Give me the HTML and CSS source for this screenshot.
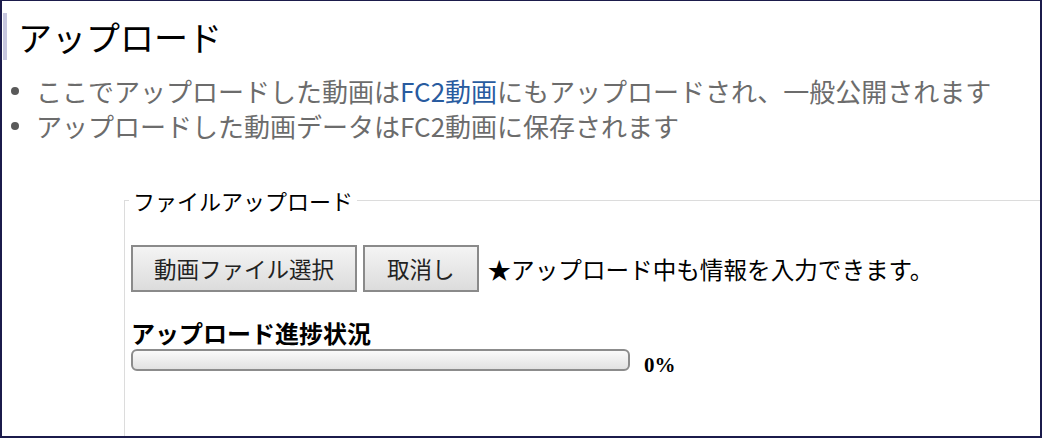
FILE: index.html
```html
<!DOCTYPE html>
<html lang="ja">
<head>
<meta charset="utf-8">
<link rel="stylesheet" href="styles.css">
</head>
<body>
<div class="frame">
  <h1 class="title">アップロード</h1>
  <ul class="notes">
    <li>ここでアップロードした動画は<a class="link" href="#">FC2動画</a>にもアップロードされ、一般公開されます</li>
    <li>アップロードした動画データはFC2動画に保存されます</li>
  </ul>
  <fieldset class="upload">
    <legend class="upload-legend">ファイルアップロード</legend>
    <div class="actions">
      <button class="btn" type="button">動画ファイル選択</button>
      <button class="btn btn-cancel" type="button">取消し</button>
      <span class="hint">★アップロード中も情報を入力できます。</span>
    </div>
    <div class="progress-label">アップロード進捗状況</div>
    <div class="progress-row">
      <div class="progress-bar"></div>
      <span class="progress-value">0%</span>
    </div>
  </fieldset>
</div>
</body>
</html>
```

FILE: styles.css
```css
html, body {
  margin: 0;
  padding: 0;
  background: #ffffff;
}
body {
  font-family: "Noto Sans CJK JP", "Noto Sans", sans-serif;
  color: #000;
}
.frame {
  box-sizing: border-box;
  width: 1042px;
  height: 438px;
  border: 2px solid #1b1b4b;
  border-top-width: 1px;
  overflow: hidden;
  padding: 12px 0 0 1px;
}
.title {
  margin: 0;
  border-left: 4px solid #c6c6de;
  padding-left: 11px;
  font-size: 34px;
  font-weight: normal;
  line-height: 47px;
  height: 47px;
}
.notes {
  list-style: none;
  margin: 13px 0 0 0;
  padding: 0;
  color: #6c6c6c;
  font-size: 26px;
  line-height: 35px;
}
.notes li {
  display: flex;
  align-items: center;
}
.notes li::before {
  content: "";
  width: 8px;
  height: 8px;
  border-radius: 50%;
  background: #595959;
  margin: 0 17px 0 8px;
  flex: none;
}
.link {
  color: #285b9f;
  text-decoration: none;
}
.upload {
  margin: 44px 0 0 121px;
  width: 1000px;
  padding: 0 0 80px 6px;
  border: 1px solid #dcdcdc;
  border-right: none;
  min-inline-size: 0;
}
.upload-legend {
  padding: 0 4px;
  margin-left: -2px;
  font-size: 22px;
  line-height: 26px;
}
.actions {
  display: flex;
  align-items: center;
  margin-top: 32px;
}
.btn {
  box-sizing: border-box;
  height: 47px;
  padding: 0 21px;
  margin-right: 6px;
  font-family: inherit;
  font-size: 22.5px;
  line-height: 43px;
  color: #222;
  border: 2px solid #8a8a8a;
  border-radius: 0;
  background: linear-gradient(#f4f4f4, #dcdcdc);
}
.btn-cancel {
  padding: 0 22px;
  margin-right: 9px;
}
.hint {
  font-size: 23.6px;
  line-height: 30px;
}
.progress-label {
  margin-top: 27px;
  font-size: 24px;
  font-weight: bold;
  line-height: 28px;
  width: 300px;
}
.progress-row {
  display: flex;
  align-items: flex-end;
  margin-top: 2px;
}
.progress-bar {
  box-sizing: border-box;
  width: 499px;
  height: 22px;
  border: 2px solid #8c8c8c;
  border-radius: 6px;
  background: linear-gradient(#fafafa, #e2e2e2);
}
.progress-value {
  margin-left: 14px;
  font-family: "Liberation Serif", serif;
  font-weight: bold;
  font-size: 21px;
  line-height: 21px;
  margin-bottom: -5px;
}
```
